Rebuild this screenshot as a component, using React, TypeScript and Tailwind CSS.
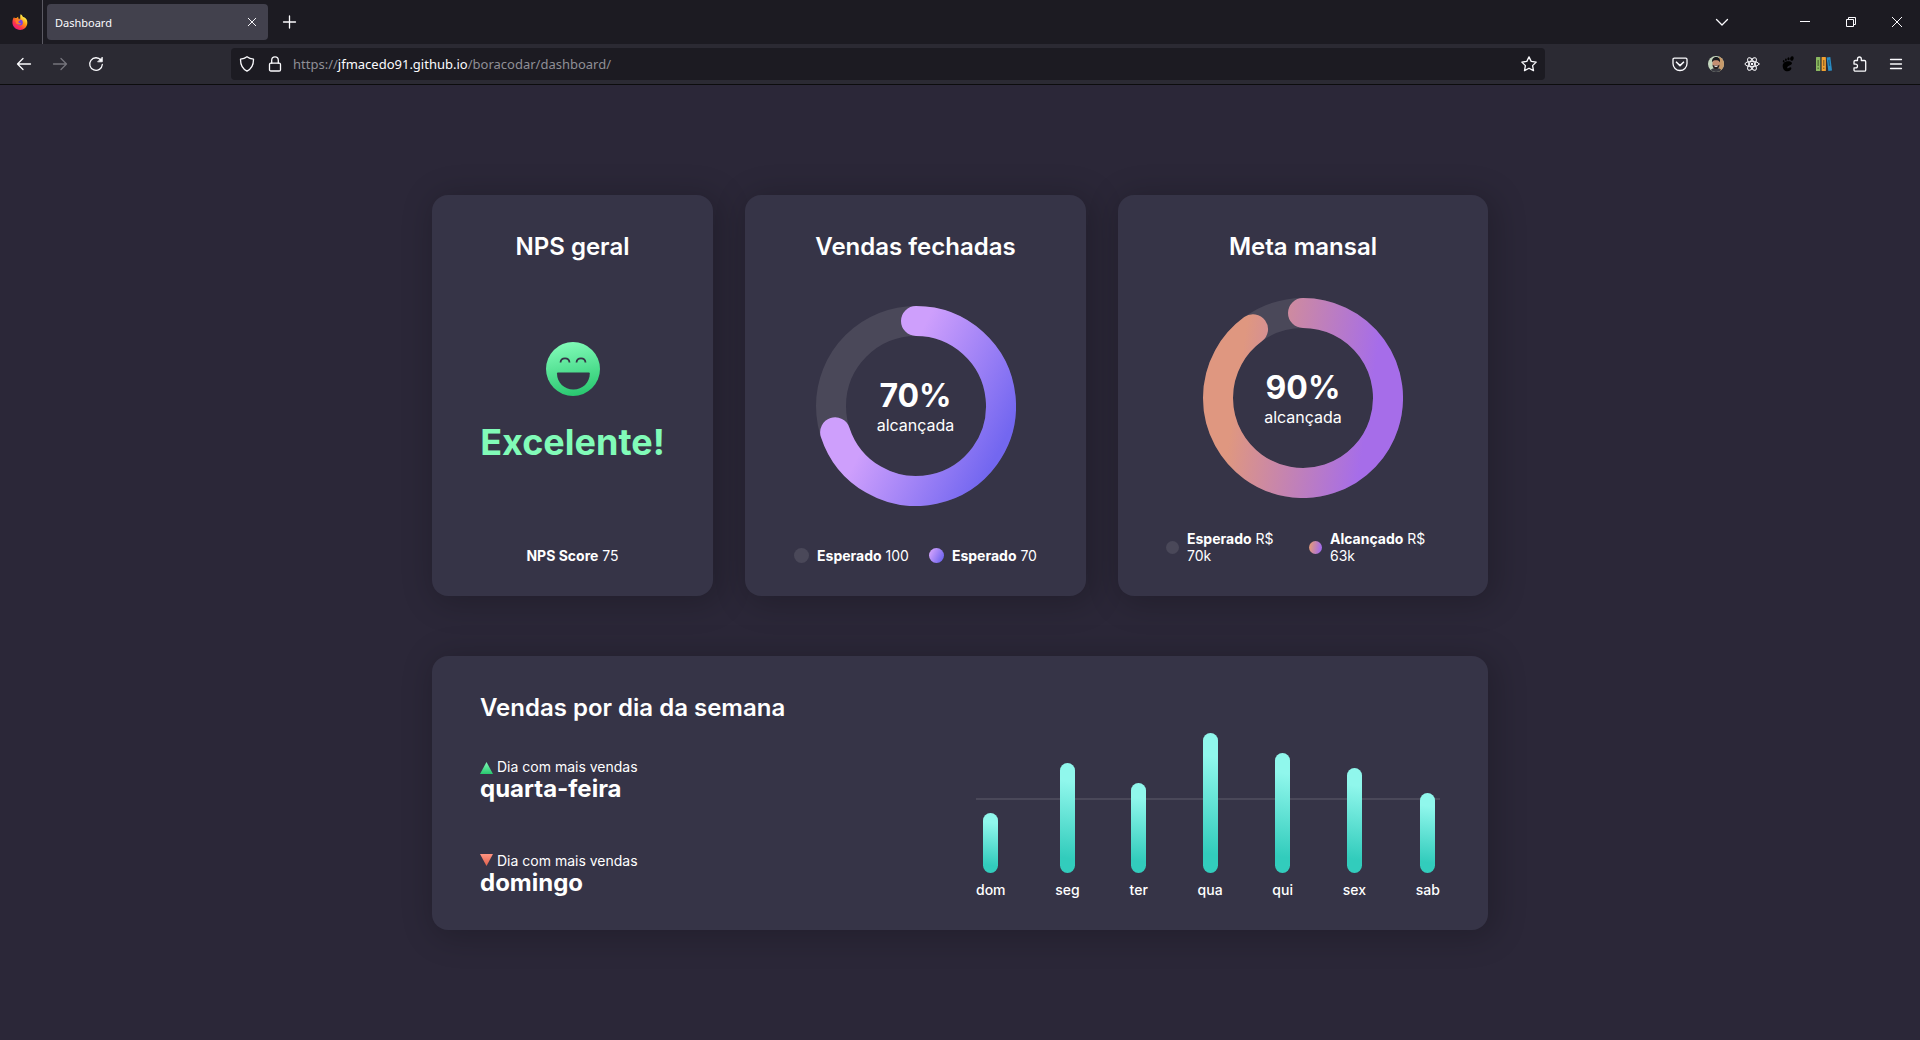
import { useId } from "react";
import type { ReactNode } from "react";

const chromeFont = "font-['Noto_Sans','Open_Sans',sans-serif]";

function FirefoxLogo() {
  return (
    <svg viewBox="0 0 16 16" className="size-4" aria-hidden="true">
      <defs>
        <linearGradient id="fx-body" x1="0.9" y1="0.1" x2="0.2" y2="1">
          <stop offset="0.1" stopColor="#fff44f" />
          <stop offset="0.4" stopColor="#ff980e" />
          <stop offset="0.7" stopColor="#ff3647" />
          <stop offset="1" stopColor="#e31587" />
        </linearGradient>
      </defs>
      <path
        d="M8.6 0.3C9.9 1 10.6 2 11 3.1C12.2 3 13.6 4 14.6 5.6C15.9 8.200 15.500 11.700 13.200 13.900C10.300 16.600 5.500 16.500 2.700 13.800C0.300 11.500 -0.100 8 1 5C1.200 4.200 1.700 3.300 2.200 2.900C2.200 3.500 2.400 4 2.700 4.200C3.200 4 3.900 3.900 4.500 4C5 3.400 5.700 2.900 6.500 2.700C6.200 3.300 6 4 6.200 4.500C7 4.700 7.800 4.600 8.100 5C8.500 4 7.900 2 8.600 0.300Z"
        fill="url(#fx-body)"
      />
      <circle cx="7.800" cy="8.400" r="3" fill="#7542e5" />
      <path d="M3.600 5.800C5.500 4.800 7.300 5.300 8.200 6.200C7.400 6.800 6.600 7.100 6.300 7.800C6.400 8.800 7.600 9.400 9 8.900C8.200 11 5.400 11 4.300 9.400C3.700 8.300 3.300 7 3.600 5.800Z" fill="#ff7a2a" />
    </svg>
  );
}

function Glyph({ children, className = "size-4" }: { children: ReactNode; className?: string }) {
  return (
    <svg viewBox="0 0 16 16" fill="none" stroke="currentColor" strokeWidth="1.3" strokeLinecap="round" strokeLinejoin="round" className={className} aria-hidden="true">
      {children}
    </svg>
  );
}

function IconButton({ label, children, className = "w-9" }: { label: string; children: ReactNode; className?: string }) {
  return (
    <button type="button" aria-label={label} className={`flex h-8 shrink-0 items-center justify-center ${className}`}>
      {children}
    </button>
  );
}

function TabStrip() {
  return (
    <div className="flex h-11 items-center bg-[#1c1b22] text-[#fbfbfe]">
      <div className="flex h-full w-[43px] items-center border-r border-[#5b5a63] pl-3">
        <FirefoxLogo />
      </div>
      <div className="ml-1 flex h-9 w-[221px] items-center justify-between rounded bg-[#42414d] pr-2 pl-2">
        <span className="pt-0.5 text-[11px]">Dashboard</span>
        <button type="button" aria-label="Fechar aba" className="flex size-4 items-center justify-center">
          <Glyph className="size-3">
            <path d="M3 3l10 10M13 3L3 13" />
          </Glyph>
        </button>
      </div>
      <IconButton label="Nova aba" className="ml-1 w-9">
        <Glyph>
          <path d="M7.500 2v12M1.500 8h12" />
        </Glyph>
      </IconButton>
      <div className="ml-auto flex items-center">
        <IconButton label="Listar abas" className="mr-[42px] w-9">
          <Glyph>
            <path d="M2.500 5.500L8 11l5.500-5.500" />
          </Glyph>
        </IconButton>
        <IconButton label="Minimizar" className="w-[46px]">
          <svg viewBox="0 0 10 10" className="size-[10px]" stroke="currentColor" shapeRendering="crispEdges" aria-hidden="true">
            <path d="M0 4.500h10" />
          </svg>
        </IconButton>
        <IconButton label="Restaurar" className="w-[46px]">
          <svg viewBox="0 0 10 10" className="size-[10px]" fill="none" stroke="currentColor" aria-hidden="true">
            <path d="M0.500 2.500h7v7h-7zM2.500 2.500v-2h7v7h-2" />
          </svg>
        </IconButton>
        <IconButton label="Fechar" className="w-[46px]">
          <svg viewBox="0 0 10 10" className="size-[10px]" stroke="currentColor" aria-hidden="true">
            <path d="M0 0l10 10M10 0L0 10" />
          </svg>
        </IconButton>
      </div>
    </div>
  );
}

function AvatarIcon() {
  return (
    <svg viewBox="0 0 16 16" className="size-4" aria-hidden="true">
      <defs>
        <clipPath id="avatar-clip">
          <circle cx="8" cy="8" r="8" />
        </clipPath>
      </defs>
      <g clipPath="url(#avatar-clip)">
        <rect width="16" height="16" fill="#c3d6bd" />
        <rect x="11" width="5" height="16" fill="#c79a6b" />
        <path d="M2 16c0-3 3-4 6-4s6 1 6 4z" fill="#3a3a42" />
        <ellipse cx="8" cy="7.500" rx="3.600" ry="4.800" fill="#c48e72" />
        <path d="M4 6.500C3.600 2.500 6 1 8.200 1S12.600 2.500 12 6.500C11.300 4.600 10 4.200 8 4.200S4.600 4.600 4 6.500z" fill="#1b1a1e" />
        <path d="M4.500 8.500c.6 1 1.600 1 3.500 1s2.900 0 3.500-1c0 3-1.600 4.600-3.500 4.600S4.500 11.500 4.500 8.500z" fill="#2b2020" />
        <path d="M6 9.800h4c-.4 1.500-3.600 1.500-4 0z" fill="#fff" />
      </g>
    </svg>
  );
}

function Toolbar() {
  return (
    <div className="flex h-[41px] items-center border-b border-[#0c0c0d] bg-[#2b2a33] px-1.5 text-[#fbfbfe]">
      <IconButton label="Voltar">
        <Glyph>
          <path d="M14.500 8H1.500M7 2.500L1.500 8l5.500 5.500" />
        </Glyph>
      </IconButton>
      <IconButton label="Avançar" className="w-9 text-[#75747c]">
        <Glyph>
          <path d="M1.500 8h13M9 2.500L14.500 8 9 13.500" />
        </Glyph>
      </IconButton>
      <IconButton label="Recarregar">
        <Glyph>
          <path d="M13 4.200A6.300 6.300 0 1 0 14.300 8.500" />
          <path d="M14.300 1.500V5.800H10z" fill="currentColor" strokeWidth="0.800" />
        </Glyph>
      </IconButton>
      <div className="ml-[117px] flex h-8 min-w-0 flex-1 items-center rounded bg-[#1c1b22] px-2">
        <Glyph>
          <path d="M8 0.700C9.800 2.100 12 2.900 14.500 3.200C14.600 8.500 12.500 13 8 15.200C3.500 13 1.400 8.500 1.500 3.200C4 2.900 6.200 2.100 8 0.700z" />
        </Glyph>
        <Glyph className="ml-3 size-4">
          <rect x="2.500" y="7.200" width="11" height="7.800" rx="1.300" />
          <path d="M4.700 7.200V4.200a3.300 3.300 0 0 1 6.600 0V7.200" />
        </Glyph>
        <a href="https://jfmacedo91.github.io/boracodar/dashboard/" className="ml-2.5 min-w-0 flex-1 truncate pt-0.5 text-[13px] text-[#8f8f96]">
          https://<span className="text-[#fbfbfe]">jfmacedo91.github.io</span>/boracodar/dashboard/
        </a>
        <button type="button" aria-label="Adicionar aos favoritos">
          <Glyph>
            <path d="M8 0.900l2.200 4.500 5 .7-3.600 3.500.9 5L8 12.200l-4.500 2.400.9-5L.8 6.100l5-.7z" />
          </Glyph>
        </button>
      </div>
      <div className="ml-[117px] flex items-center">
        <IconButton label="Pocket">
          <Glyph>
            <path d="M2.300 2.200h11.400c.7 0 1.300.5 1.300 1.200V7.500a7 7 0 0 1-14 0V3.400c0-.7.6-1.200 1.300-1.200z" />
            <path d="M4.500 6.200L8 9.600l3.500-3.400" strokeWidth="1.600" />
          </Glyph>
        </IconButton>
        <IconButton label="Perfil">
          <AvatarIcon />
        </IconButton>
        <IconButton label="React Developer Tools">
          <Glyph>
            <g strokeWidth="1">
              <ellipse cx="8" cy="8" rx="7" ry="2.700" />
              <ellipse cx="8" cy="8" rx="7" ry="2.700" transform="rotate(60 8 8)" />
              <ellipse cx="8" cy="8" rx="7" ry="2.700" transform="rotate(120 8 8)" />
            </g>
            <circle cx="8" cy="8" r="1.200" fill="currentColor" stroke="none" />
          </Glyph>
        </IconButton>
        <IconButton label="GNOME Shell">
          <svg viewBox="0 0 16 16" className="size-4 fill-black" aria-hidden="true">
            <path d="M8 5.200C4.500 5.200 2.600 7.500 2.700 10.200C2.800 13.400 5 15.500 7.600 15.300C9.800 15.100 11.500 13.400 11.400 11.900C11.200 10.700 9.500 11.200 8.600 12C7.500 12.700 6.800 11.900 7.400 10.900C8.300 9.600 11.600 9.300 12 7.300C12.200 5.800 10 5.200 8 5.200Z" />
            <ellipse cx="11.900" cy="2.500" rx="1.700" ry="2.300" transform="rotate(15 11.900 2.500)" />
            <ellipse cx="8.500" cy="2.800" rx="1.100" ry="1.500" />
            <ellipse cx="5.900" cy="3.800" rx="0.900" ry="1.300" />
            <ellipse cx="3.700" cy="5.300" rx="0.800" ry="1.200" />
          </svg>
        </IconButton>
        <IconButton label="Biblioteca">
          <svg viewBox="0 0 16 16" className="size-4" aria-hidden="true">
            <rect x="0" y="1" width="4.300" height="14" rx="0.500" fill="#8ab861" />
            <rect x="5.600" y="1" width="4.300" height="14" rx="0.500" fill="#f0a030" />
            <path d="M10.600 1.500L14.300 1L16 14.500L12.300 15z" fill="#2a8cc4" />
            <path d="M1.500 4h1.300v6h-1.300zM1.500 11.500h1.300v1.500h-1.300z" fill="#4f7035" />
            <path d="M7.100 4h1.300v6h-1.300zM7.100 11.500h1.300v1.500h-1.300z" fill="#8f6428" />
            <path d="M12.200 4l1.200-.2.800 6-1.200.2z" fill="#1b5f88" />
          </svg>
        </IconButton>
        <IconButton label="Extensões">
          <Glyph>
            <path d="M2 7V5.700c0-.7.500-1.200 1.200-1.200h2.300V2.900a1.900 1.900 0 0 1 3.800 0v1.600h3.200c.7 0 1.200.5 1.200 1.200v8.200c0 .7-.5 1.200-1.200 1.200H3.200c-.7 0-1.200-.5-1.200-1.200v-2h1.600a1.900 1.900 0 0 0 0-3.800H2z" />
          </Glyph>
        </IconButton>
        <IconButton label="Menu">
          <Glyph>
            <path d="M2.500 3.500h11M2.500 8h11M2.500 12.500h11" />
          </Glyph>
        </IconButton>
      </div>
    </div>
  );
}

function Card({ title, children, className = "" }: { title: string; children: ReactNode; className?: string }) {
  return (
    <section className={`flex flex-col rounded-2xl bg-[#363447] px-12 pt-9 pb-8 shadow-[4px_4px_32px_4px_rgba(0,0,0,0.2)] ${className}`}>
      <h2 className="text-2xl leading-8 font-semibold">{title}</h2>
      {children}
    </section>
  );
}

function HappyFace() {
  return (
    <svg viewBox="0 0 54 54" className="size-[54px]" aria-hidden="true">
      <defs>
        <linearGradient id="face" x1="0.400" y1="0" x2="0.600" y2="1">
          <stop stopColor="#81fbb8" />
          <stop offset="1" stopColor="#28c76f" />
        </linearGradient>
      </defs>
      <circle cx="27" cy="27" r="27" fill="url(#face)" />
      <path d="M11 31.500q0-.9.9-.9h31q.9 0 .9.900c0 9-7.200 16-16.400 16S11 40.500 11 31.500z" fill="#363447" />
      <path d="M14.500 20.500c.5-5.500 8.500-5.500 9 0M30.500 20.500c.5-5.500 8.500-5.500 9 0" fill="none" stroke="#363447" strokeWidth="1.800" />
    </svg>
  );
}

type Gradient = { from: string; to: string; line: [number, number, number, number] };

const violet: Gradient = { from: "#ce9ffc", to: "#7367f0", line: [-26, -13, 84, 43] };
const sunset: Gradient = { from: "#df9780", to: "#a66de9", line: [-66, -10, 66, 10] };

function Ring({ percent, gradient }: { percent: number; gradient: Gradient }) {
  const id = useId();
  const angle = (percent / 100) * 2 * Math.PI;
  const [x1, y1, x2, y2] = gradient.line;
  return (
    <div className="grid size-[200px] place-items-center">
      <svg viewBox="-100 -100 200 200" className="col-start-1 row-start-1 size-full" aria-hidden="true">
        <defs>
          <linearGradient id={id} gradientUnits="userSpaceOnUse" x1={x1} y1={y1} x2={x2} y2={y2}>
            <stop stopColor={gradient.from} />
            <stop offset="1" stopColor={gradient.to} />
          </linearGradient>
        </defs>
        <circle r="85" fill="none" stroke="#4a4859" strokeWidth="30" />
        <path
          d={`M0 -85A85 85 0 1 1 ${85 * Math.sin(angle)} ${-85 * Math.cos(angle)}`}
          fill="none"
          stroke={`url(#${id})`}
          strokeWidth="30"
          strokeLinecap="round"
        />
      </svg>
      <p className="col-start-1 row-start-1 flex flex-col items-center">
        <strong className="text-[32px] leading-[38px] font-bold">{percent}%</strong>
        <span className="leading-5">alcançada</span>
      </p>
    </div>
  );
}

function Legend({ label, value, dot, className = "" }: { label: string; value: string; dot: string; className?: string }) {
  return (
    <li className={`flex items-center gap-2 ${className}`}>
      <span className={`rounded-full ${dot}`} />
      <span>
        <strong className="font-bold">{label}</strong> {value}
      </span>
    </li>
  );
}

const days = [
  { name: "dom", height: 60 },
  { name: "seg", height: 110 },
  { name: "ter", height: 90 },
  { name: "qua", height: 140 },
  { name: "qui", height: 120 },
  { name: "sex", height: 105 },
  { name: "sab", height: 80 },
];

function DayHighlight({ up, day }: { up: boolean; day: string }) {
  const id = useId();
  return (
    <div>
      <p className={`flex gap-1 text-sm leading-[18px] ${up ? "items-center" : "items-start"}`}>
        <svg viewBox="0 0 13 12" className="mt-0.5 h-3 w-[13px]" aria-hidden="true">
          <defs>
            <linearGradient id={id} x1="0" y1="0" x2="0" y2="1">
              <stop stopColor={up ? "#81fbb8" : "#ff9482"} />
              <stop offset="1" stopColor={up ? "#28c76f" : "#e0604c"} />
            </linearGradient>
          </defs>
          <path d={up ? "M6.500 0L13 12H0z" : "M0 0h13L6.500 12z"} fill={`url(#${id})`} />
        </svg>
        Dia com mais vendas
      </p>
      <strong className="block text-2xl leading-[26px] font-bold">{day}</strong>
    </div>
  );
}

export default function App() {
  return (
    <div className="flex min-h-screen flex-col bg-[#2b2738]">
      <header className={chromeFont}>
        <TabStrip />
        <Toolbar />
      </header>
      <main className="flex flex-1 items-center justify-center font-[Inter,sans-serif] text-white">
        <div className="w-full max-w-[1056px]">
          <div className="flex gap-8 text-center">
            <Card title="NPS geral" className="w-[281px] items-center">
              <div className="mt-[79px] flex flex-col items-center gap-6">
                <HappyFace />
                <p className="text-4xl leading-[44px] font-bold text-[#81fbb8]">Excelente!</p>
              </div>
              <p className="mt-auto text-sm leading-[17px]">
                <strong className="font-bold">NPS Score</strong> 75
              </p>
            </Card>
            <Card title="Vendas fechadas" className="w-[341px] items-center">
              <div className="mt-[43px]">
                <Ring percent={70} gradient={violet} />
              </div>
              <ul className="mt-auto flex gap-5 text-sm leading-[17px] whitespace-nowrap">
                <Legend label="Esperado" value="100" dot="size-[15px] bg-[#4a4859]" />
                <Legend label="Esperado" value="70" dot="size-[15px] bg-linear-[117deg,#ce9ffc_15%,#7367f0_85%]" />
              </ul>
            </Card>
            <Card title="Meta mansal" className="min-w-0 flex-1 items-center">
              <div className="mt-[35px]">
                <Ring percent={90} gradient={sunset} />
              </div>
              <ul className="mt-8 flex w-full justify-between text-left text-sm leading-[17px]">
                <Legend label="Esperado" value="R$ 70k" dot="size-[13px] shrink-0 bg-[#4a4859]" className="w-[120px]" />
                <Legend label="Alcançado" value="R$ 63k" dot="size-[13px] shrink-0 bg-linear-[100deg,#df9780_15%,#a66de9_85%]" className="w-[131px]" />
              </ul>
            </Card>
          </div>
          <Card title="Vendas por dia da semana" className="mt-[60px]">
            <div className="flex justify-between">
              <div className="flex flex-col gap-[50px] pt-[34px]">
                <DayHighlight up day="quarta-feira" />
                <DayHighlight up={false} day="domingo" />
              </div>
              <div className="mt-[9px] grid w-[464px] items-end">
                <hr className="col-start-1 row-start-1 mb-[98px] border-t-2 border-[#4a4859]" />
                <ul className="col-start-1 row-start-1 flex items-end justify-between">
                  {days.map((day) => (
                    <li key={day.name} className="flex flex-col items-center gap-2">
                      <span className="w-[15px] rounded-full bg-linear-[188deg,#90f7ec_17%,#32ccbc_86%]" style={{ height: day.height }} />
                      <span className="text-sm leading-[17px] font-medium">{day.name}</span>
                    </li>
                  ))}
                </ul>
              </div>
            </div>
          </Card>
        </div>
      </main>
    </div>
  );
}
